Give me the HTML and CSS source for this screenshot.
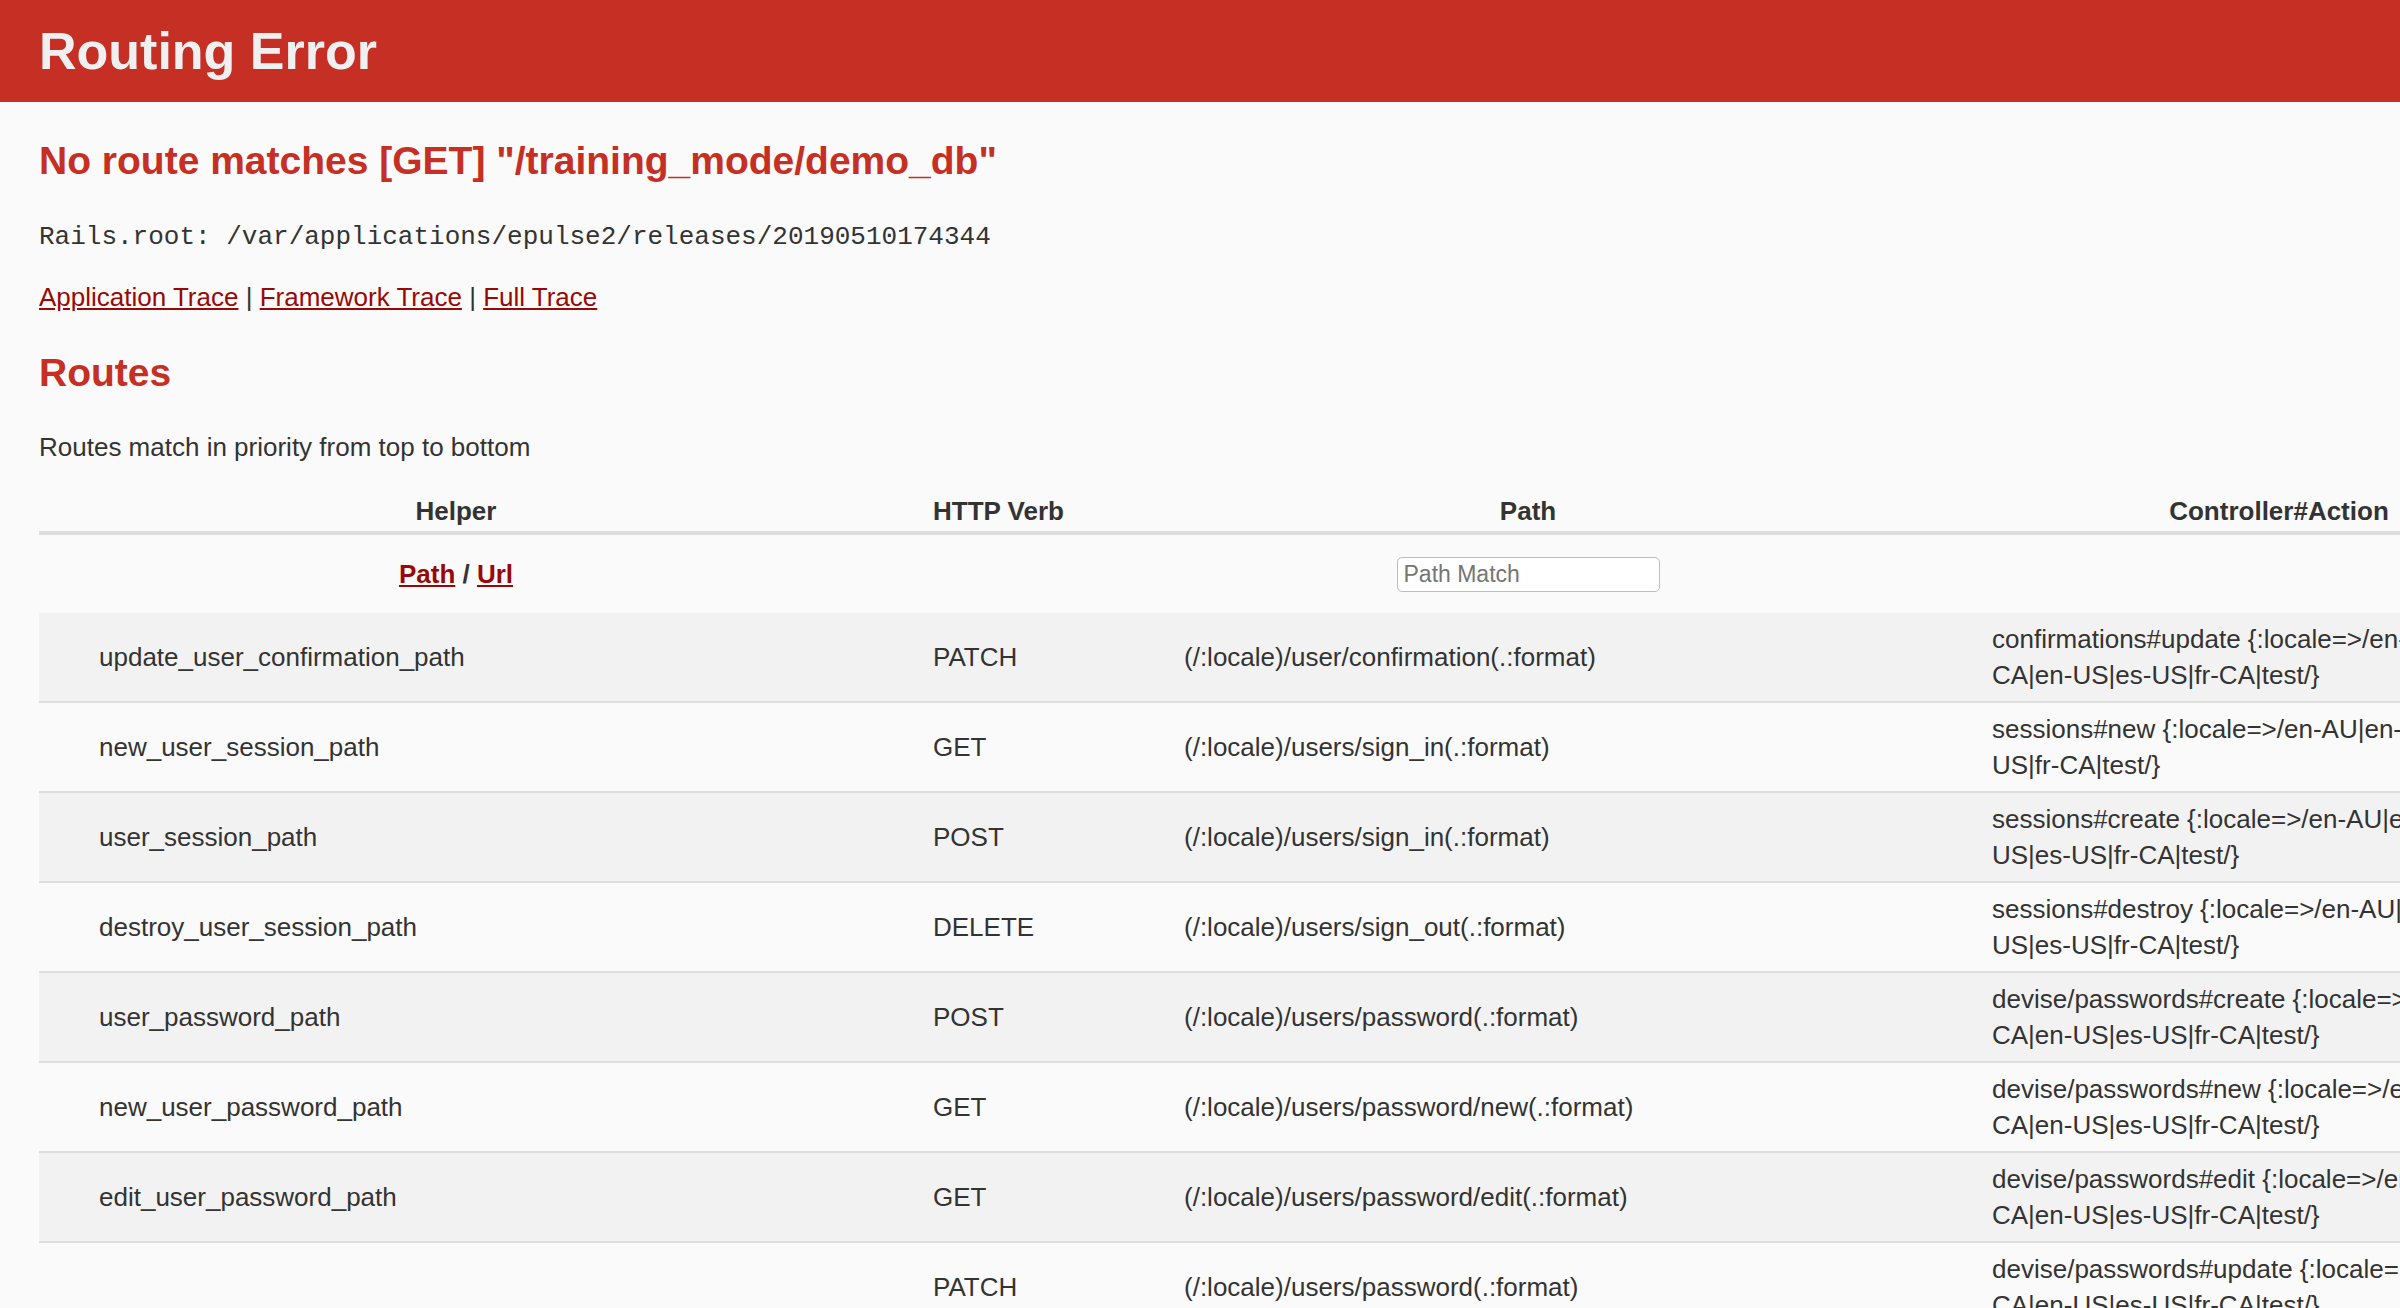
FILE: index.html
```html
<!DOCTYPE html>
<html lang="en">
<head>
<meta charset="utf-8">
<title>Action Controller: Exception caught</title>
<link rel="stylesheet" href="styles.css">
</head>
<body>
<header class="page-header">
  <h1 class="page-title">Routing Error</h1>
</header>
<div class="container">
  <h2 class="error-title">No route matches [GET] "/training_mode/demo_db"</h2>
  <p class="root"><code class="root-code">Rails.root: /var/applications/epulse2/releases/20190510174344</code></p>
  <div class="traces">
    <a href="#" class="trace-link">Application Trace</a> | <a href="#" class="trace-link">Framework Trace</a> | <a href="#" class="trace-link">Full Trace</a>
  </div>
  <h2 class="section-title">Routes</h2>
  <p class="intro">Routes match in priority from top to bottom</p>
  <table class="route-table">
    <colgroup>
      <col class="col-helper">
      <col class="col-verb">
      <col class="col-path">
      <col class="col-action">
    </colgroup>
    <thead>
      <tr class="head-row">
        <th>Helper</th>
        <th>HTTP Verb</th>
        <th>Path</th>
        <th>Controller#Action</th>
      </tr>
      <tr class="filter-row">
        <th><a href="#" class="helper-link">Path</a> / <a href="#" class="helper-link">Url</a></th>
        <th></th>
        <th><input type="search" class="path-search" placeholder="Path Match"></th>
        <th></th>
      </tr>
    </thead>
    <tbody>
      <tr class="route-row">
        <td>update_user_confirmation_path</td>
        <td>PATCH</td>
        <td>(/:locale)/user/confirmation(.:format)</td>
        <td class="action">confirmations#update {:locale=&gt;/en-AU|en-<br>CA|en-US|es-US|fr-CA|test/}</td>
      </tr>
      <tr class="route-row">
        <td>new_user_session_path</td>
        <td>GET</td>
        <td>(/:locale)/users/sign_in(.:format)</td>
        <td class="action">sessions#new {:locale=&gt;/en-AU|en-CA|en-US|es-<br>US|fr-CA|test/}</td>
      </tr>
      <tr class="route-row">
        <td>user_session_path</td>
        <td>POST</td>
        <td>(/:locale)/users/sign_in(.:format)</td>
        <td class="action">sessions#create {:locale=&gt;/en-AU|en-CA|en-<br>US|es-US|fr-CA|test/}</td>
      </tr>
      <tr class="route-row">
        <td>destroy_user_session_path</td>
        <td>DELETE</td>
        <td>(/:locale)/users/sign_out(.:format)</td>
        <td class="action">sessions#destroy {:locale=&gt;/en-AU|en-CA|en-<br>US|es-US|fr-CA|test/}</td>
      </tr>
      <tr class="route-row">
        <td>user_password_path</td>
        <td>POST</td>
        <td>(/:locale)/users/password(.:format)</td>
        <td class="action">devise/passwords#create {:locale=&gt;/en-AU|en-<br>CA|en-US|es-US|fr-CA|test/}</td>
      </tr>
      <tr class="route-row">
        <td>new_user_password_path</td>
        <td>GET</td>
        <td>(/:locale)/users/password/new(.:format)</td>
        <td class="action">devise/passwords#new {:locale=&gt;/en-AU|en-<br>CA|en-US|es-US|fr-CA|test/}</td>
      </tr>
      <tr class="route-row">
        <td>edit_user_password_path</td>
        <td>GET</td>
        <td>(/:locale)/users/password/edit(.:format)</td>
        <td class="action">devise/passwords#edit {:locale=&gt;/en-AU|en-<br>CA|en-US|es-US|fr-CA|test/}</td>
      </tr>
      <tr class="route-row">
        <td></td>
        <td>PATCH</td>
        <td>(/:locale)/users/password(.:format)</td>
        <td class="action">devise/passwords#update {:locale=&gt;/en-AU|en-<br>CA|en-US|es-US|fr-CA|test/}</td>
      </tr>
      <tr class="route-row">
        <td></td>
        <td>PUT</td>
        <td>(/:locale)/users/password(.:format)</td>
        <td class="action">devise/passwords#update {:locale=&gt;/en-AU|en-<br>CA|en-US|es-US|fr-CA|test/}</td>
      </tr>
      <tr class="route-row">
        <td>root_path</td>
        <td>GET</td>
        <td>/</td>
        <td class="action">home#index</td>
      </tr>
    </tbody>
  </table>
</div>
</body>
</html>
```

FILE: styles.css
```css
html {
  overflow: hidden;
}

body {
  margin: 0;
  background: #fafafa;
  color: #333;
  font-family: "Liberation Sans", Arial, Helvetica, sans-serif;
  font-size: 26px;
  line-height: 36px;
}

.page-header {
  background: #c52f24;
  color: #f0f0f0;
  padding: 13px 39px;
}

.page-title {
  margin: 10px 0;
  font-size: 52px;
  line-height: 56px;
  font-weight: bold;
}

.container {
  padding: 0 39px;
}

.error-title {
  color: #c52f24;
  font-size: 39px;
  line-height: 50px;
  font-weight: bold;
  margin: 34px 0 31px;
}

.root {
  margin: 0 0 24px;
}

.root-code {
  font-family: "Liberation Mono", "Courier New", monospace;
  font-size: 26px;
}

.trace-link,
.helper-link {
  color: #980905;
}

.section-title {
  color: #c52f24;
  font-size: 39px;
  line-height: 50px;
  font-weight: bold;
  margin: 33px 0 31px;
}

.intro {
  margin: 0 0 26px;
}

.route-table {
  border-collapse: separate;
  border-spacing: 0;
  table-layout: fixed;
  width: 2587px;
  margin: 0;
}

.col-helper { width: 834px; }
.col-verb { width: 251px; }
.col-path { width: 808px; }
.col-action { width: 694px; }

.head-row th {
  padding: 2px 0;
  line-height: 36px;
  font-weight: bold;
  text-align: center;
  border-bottom: 4px solid #ddd;
}

.filter-row th {
  height: 78px;
  padding: 0;
  line-height: 30px;
  font-weight: bold;
  text-align: center;
  vertical-align: middle;
}

.path-search {
  display: block;
  margin: 0 auto;
  box-sizing: border-box;
  width: 263px;
  height: 35px;
  padding: 0 6px;
  border: 1px solid #bdbdbd;
  border-radius: 5px;
  background: #fff;
  font-family: "Liberation Sans", Arial, sans-serif;
  font-size: 23px;
  color: #333;
  -webkit-appearance: none;
  appearance: none;
  outline: none;
}

.path-search::placeholder {
  color: #757575;
}

.route-row td {
  padding: 8px 60px;
  line-height: 36px;
  border-bottom: 2px solid #ddd;
  vertical-align: middle;
  white-space: nowrap;
}

.route-row:nth-child(odd) {
  background: #f2f2f2;
}
```
